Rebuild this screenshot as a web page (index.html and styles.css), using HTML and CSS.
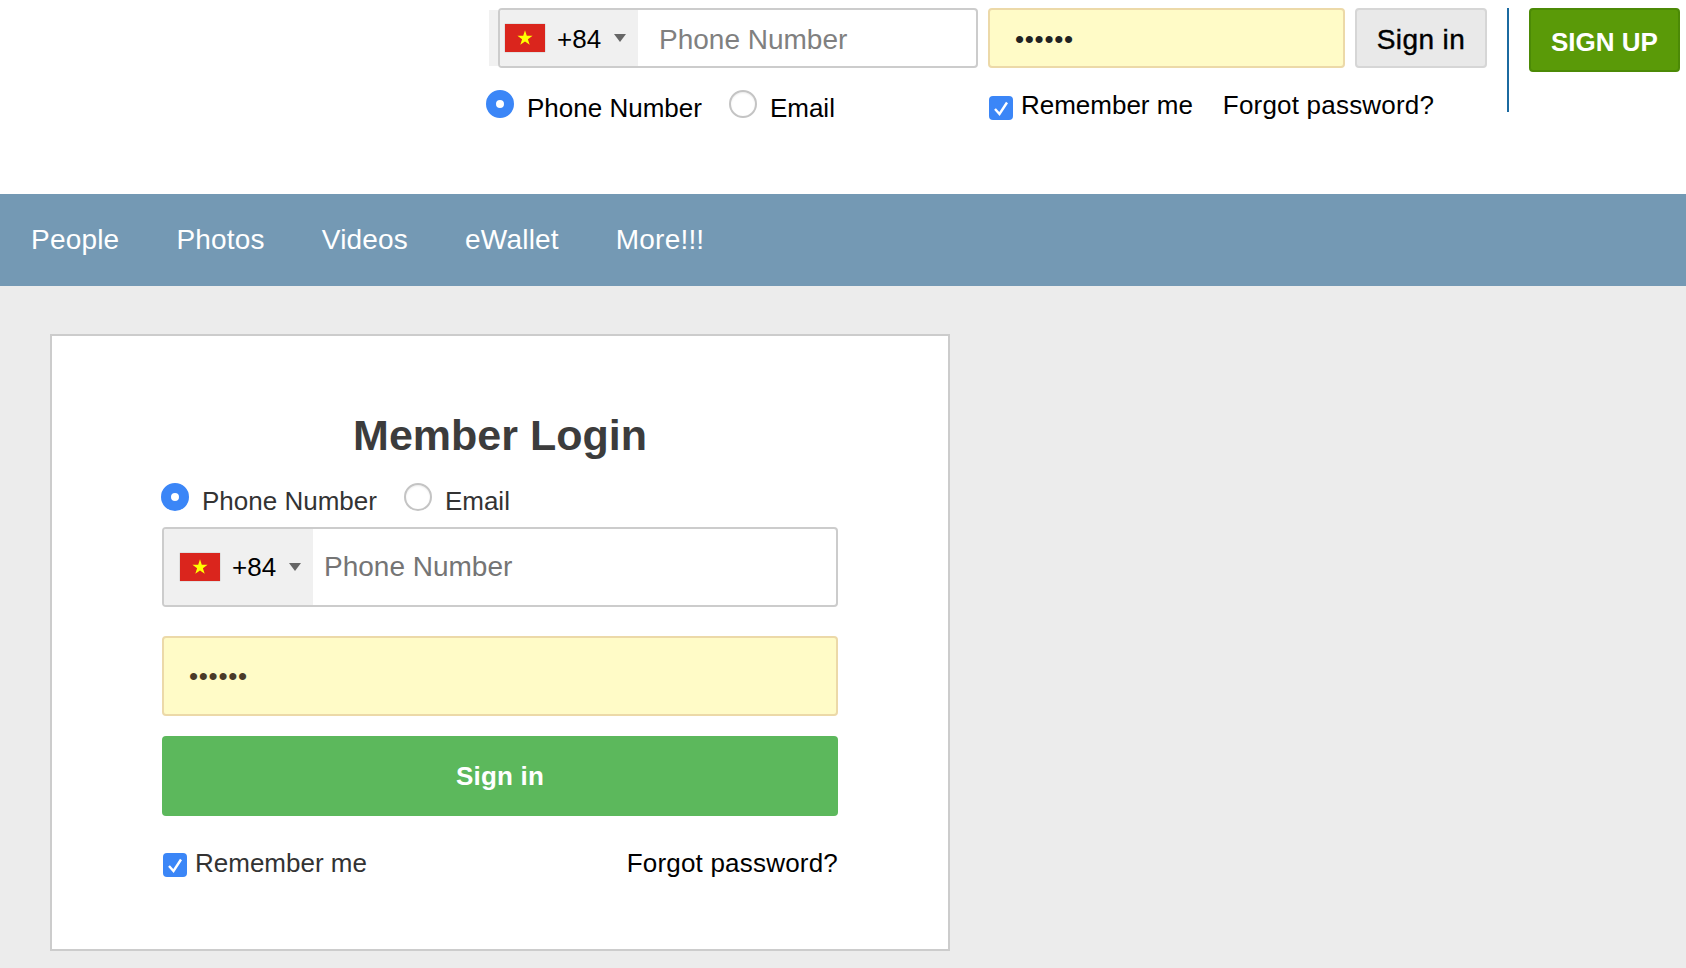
FILE: index.html
```html
<!DOCTYPE html>
<html lang="en">
<head>
<meta charset="utf-8">
<title>Member Login</title>
<link rel="stylesheet" href="styles.css">
</head>
<body>
<header class="topbar">
  <form class="top-form">
    <div class="top-fields">
      <div class="strip"></div>
      <div class="phone phone-top">
        <div class="dial">
          <svg class="flag" viewBox="0 0 40 28"><rect width="40" height="28" fill="#da251d"/><polygon fill="#ffff00" points="20,6.3 21.8,11.8 27.6,11.8 22.9,15.2 24.7,20.8 20,17.4 15.3,20.8 17.1,15.2 12.4,11.8 18.2,11.8"/></svg>
          <span class="code">+84</span>
          <span class="caret"></span>
        </div>
        <input class="phone-input" type="text" placeholder="Phone Number">
      </div>
      <input class="pass pass-top" type="password" value="secret">
      <button class="btn-signin" type="button">Sign in</button>
    </div>
    <div class="options">
      <div class="choices">
        <span class="radio on"></span><span class="choice-label">Phone Number</span>
        <span class="radio second"></span><span class="choice-label">Email</span>
      </div>
      <div class="remember remember-top">
        <span class="check"><svg viewBox="0 0 24 24"><path d="M6 13 L10.5 18 L18 6.5" fill="none" stroke="#fff" stroke-width="2.4"/></svg></span>
        <span class="remember-label">Remember me</span>
      </div>
      <a class="forgot forgot-top" href="#">Forgot password?</a>
    </div>
  </form>
  <div class="divider"></div>
  <button class="btn-signup" type="button">SIGN UP</button>
</header>
<nav class="nav">
  <a href="#">People</a>
  <a href="#">Photos</a>
  <a href="#">Videos</a>
  <a href="#">eWallet</a>
  <a href="#">More!!!</a>
</nav>
<main class="main">
  <form class="card">
    <h1 class="title">Member Login</h1>
    <div class="choices card-choices">
      <span class="radio on"></span><span class="choice-label dark">Phone Number</span>
      <span class="radio second"></span><span class="choice-label dark">Email</span>
    </div>
    <div class="phone phone-card">
      <div class="dial">
        <svg class="flag" viewBox="0 0 40 28"><rect width="40" height="28" fill="#da251d"/><polygon fill="#ffff00" points="20,6.3 21.8,11.8 27.6,11.8 22.9,15.2 24.7,20.8 20,17.4 15.3,20.8 17.1,15.2 12.4,11.8 18.2,11.8"/></svg>
        <span class="code">+84</span>
        <span class="caret"></span>
      </div>
      <input class="phone-input" type="text" placeholder="Phone Number">
    </div>
    <input class="pass pass-card" type="password" value="secret">
    <button class="btn-green" type="button">Sign in</button>
    <div class="card-foot">
      <div class="remember">
        <span class="check"><svg viewBox="0 0 24 24"><path d="M6 13 L10.5 18 L18 6.5" fill="none" stroke="#fff" stroke-width="2.4"/></svg></span>
        <span class="remember-label dark">Remember me</span>
      </div>
      <a class="forgot" href="#">Forgot password?</a>
    </div>
  </form>
</main>
</body>
</html>
```
FILE: styles.css
```css
* { box-sizing: border-box; }
html, body { margin: 0; height: 100%; overflow: hidden; }
body {
  background: #ececec;
  font-family: "Liberation Sans", Arial, sans-serif;
  font-size: 26px;
  color: #000;
}
a { text-decoration: none; color: inherit; }

.topbar {
  display: flex;
  align-items: flex-start;
  height: 194px;
  padding: 8px 5px 0 486px;
  background: #fff;
}
.top-form { width: 1001px; }
.top-fields { display: flex; align-items: center; height: 60px; }
.strip { width: 9px; height: 56px; margin-left: 3px; background: #f1f1f1; }

.phone {
  display: flex;
  border: 2px solid #ccc;
  border-radius: 4px;
  background: #fff;
  overflow: hidden;
}
.phone-top { width: 480px; height: 60px; }
.phone-card { height: 80px; margin-bottom: 29px; }
.dial { display: flex; align-items: center; background: #f0f0f0; flex: none; }
.phone-top .dial { width: 138px; padding-left: 5px; }
.phone-card .dial { width: 149px; padding-left: 16px; }
.flag { width: 40px; height: 28px; flex: none; box-shadow: 0 0 1px rgba(0,0,0,.4); }
.code { margin: 0 13px 0 12px; font-size: 26px; color: #000; }
.phone-top .code { padding-top: 2px; }
.caret {
  width: 0;
  height: 0;
  border-left: 6px solid transparent;
  border-right: 6px solid transparent;
  border-top: 8px solid #666;
}
.phone-input {
  flex: 1;
  min-width: 0;
  border: 0;
  outline: 0;
  background: transparent;
  font: 28px "Liberation Sans", Arial, sans-serif;
}
.phone-top .phone-input { padding: 4px 0 0 21px; }
.phone-card .phone-input { padding: 0 0 0 11px; }
.phone-top .phone-input::placeholder { color: #808080; opacity: 1; }
.phone-card .phone-input::placeholder { color: #757575; opacity: 1; }

.pass {
  display: block;
  border: 2px solid #ecd9a8;
  border-radius: 4px;
  outline: 0;
  background: #fffbc7;
  padding: 0 0 0 25px;
  font: 26px "Liberation Sans", Arial, sans-serif;
  letter-spacing: .7px;
}
.pass-top { width: 357px; height: 60px; margin: 0 10px; padding-top: 2px; color: #222; }
.pass-card { width: 100%; height: 80px; margin-bottom: 20px; color: #4a3a28; }

.btn-signin {
  width: 132px;
  height: 60px;
  padding: 4px 0 0;
  border: 2px solid #d6d6d6;
  border-radius: 4px;
  background: #e9e9e9;
  color: #000;
  font: 28px "Liberation Sans", Arial, sans-serif;
  letter-spacing: .4px;
  -webkit-text-stroke: .4px #000;
}
.divider { width: 2px; height: 104px; margin: 0 20px; background: #1b6aa0; flex: none; }
.btn-signup {
  flex: none;
  width: 151px;
  height: 64px;
  padding: 4px 0 0;
  border: 2px solid #4c8a06;
  border-radius: 4px;
  background: #5a9a08;
  color: #fff;
  font: bold 26px "Liberation Sans", Arial, sans-serif;
}

.options { display: flex; align-items: flex-start; height: 30px; margin-top: 21px; }
.choices { display: flex; align-items: flex-start; height: 30px; }
.radio {
  flex: none;
  width: 28px;
  height: 28px;
  margin-top: 1px;
  border-radius: 50%;
  border: 2px solid #c4c4c4;
  background: #fff;
  box-shadow: inset 0 1px 2px rgba(0,0,0,.08);
}
.radio.on { border: 10px solid #3b86f7; box-shadow: none; }
.radio.second { margin-left: 27px; }
.choice-label { margin: 4px 0 0 13px; line-height: 30px; color: #000; white-space: nowrap; }
.dark { color: #333; }

.remember { display: flex; align-items: flex-start; }
.remember-top { margin-left: 154px; }
.check {
  flex: none;
  display: block;
  width: 24px;
  height: 24px;
  margin-top: 5px;
  border-radius: 4px;
  background: #3b86f7;
}
.remember-top .check { margin-top: 7px; }
.check svg { display: block; width: 24px; height: 24px; }
.remember-label { margin-left: 8px; line-height: 30px; white-space: nowrap; }
.remember-top .remember-label { margin-top: 1px; }
.forgot { line-height: 30px; color: #000; white-space: nowrap; letter-spacing: .2px; }
.forgot-top { margin: 1px 0 0 30px; }

.nav {
  display: flex;
  align-items: center;
  gap: 57px;
  height: 92px;
  padding-left: 31px;
  background: #7499b4;
  color: #fff;
  font-size: 28px;
  line-height: 32px;
  letter-spacing: .2px;
}

.main { padding: 48px 0 0 50px; }
.card {
  width: 900px;
  height: 617px;
  padding: 74px 110px 0;
  border: 2px solid #ccc;
  background: #fff;
}
.title {
  margin: 0 0 22px;
  text-align: center;
  font-size: 43px;
  line-height: 50px;
  font-weight: bold;
  color: #3c3c3c;
}
.card-choices { margin: 0 0 15px -1px; }
.btn-green {
  display: block;
  width: 100%;
  height: 80px;
  padding: 0;
  border: 0;
  border-radius: 4px;
  background: #5cb85c;
  color: #fff;
  font: bold 26px "Liberation Sans", Arial, sans-serif;
  letter-spacing: .2px;
}
.card-foot { display: flex; justify-content: space-between; margin-top: 32px; }
.card-foot .remember { margin-left: 1px; }
```
